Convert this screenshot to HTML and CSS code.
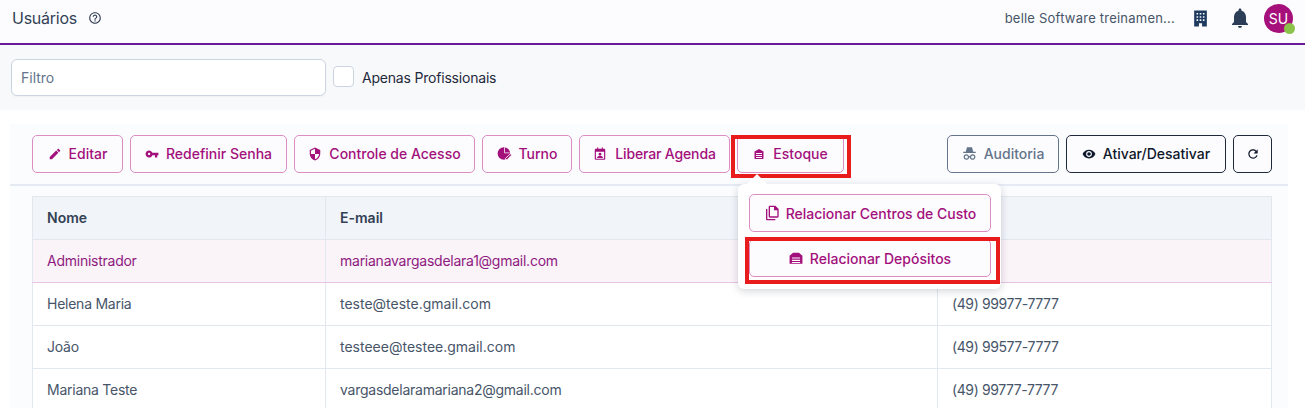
FILE: index.html
```html
<!DOCTYPE html>
<html lang="pt-BR">
<head>
<meta charset="utf-8">
<title>Usuários</title>
<link rel="stylesheet" href="styles.css">
</head>
<body>
<header class="topbar">
  <div class="topbar-left">
    <h1 class="page-title">Usuários</h1>
    <svg class="help-icon" viewBox="0 0 24 24"><path d="M11 18h2v-2h-2v2zm1-16C6.48 2 2 6.48 2 12s4.48 10 10 10 10-4.48 10-10S17.52 2 12 2zm0 18c-4.41 0-8-3.59-8-8s3.59-8 8-8 8 3.59 8 8-3.59 8-8 8zm0-14c-2.21 0-4 1.79-4 4h2c0-1.1.9-2 2-2s2 .9 2 2c0 2-3 1.75-3 5h2c0-2.25 3-2.5 3-5 0-2.21-1.79-4-4-4z"/></svg>
  </div>
  <div class="topbar-right">
    <span class="company">belle Software treinamen...</span>
    <svg class="top-icon building" viewBox="0 0 24 24"><path fill-rule="evenodd" d="M4 2h16v20h-6v-4h-4v4H4V2zm3 3v2h2V5H7zm4 0v2h2V5h-2zm4 0v2h2V5h-2zM7 9v2h2V9H7zm4 0v2h2V9h-2zm4 0v2h2V9h-2zM7 13v2h2v-2H7zm4 0v2h2v-2h-2zm4 0v2h2v-2h-2z"/></svg>
    <svg class="top-icon bell" viewBox="0 0 24 24"><path d="M12 22c1.1 0 2-.9 2-2h-4c0 1.1.89 2 2 2zm6-6v-5c0-3.07-1.64-5.64-4.5-6.32V4c0-.83-.67-1.5-1.5-1.5s-1.5.67-1.5 1.5v.68C7.63 5.36 6 7.92 6 11v5l-2 2v1h16v-1l-2-2z"/></svg>
    <div class="avatar">SU<span class="status-dot"></span></div>
  </div>
</header>

<section class="filter-bar">
  <input class="filter-input" type="text" placeholder="Filtro">
  <label class="check-label"><span class="checkbox"></span>Apenas Profissionais</label>
</section>

<main class="card-wrap">
  <div class="card">
    <div class="toolbar">
      <div class="toolbar-group">
        <button class="btn btn-pink btn-editar"><svg class="ico" viewBox="0 0 24 24"><path d="M3 17.25V21h3.75L17.81 9.94l-3.75-3.75L3 17.25zM20.71 7.04c.39-.39.39-1.02 0-1.41l-2.34-2.34c-.39-.39-1.02-.39-1.41 0l-1.83 1.83 3.75 3.75 1.83-1.83z"/></svg>Editar</button>
        <button class="btn btn-pink btn-senha"><svg class="ico" viewBox="0 0 24 24"><path d="M12.65 10C11.83 7.67 9.61 6 7 6c-3.31 0-6 2.69-6 6s2.69 6 6 6c2.61 0 4.83-1.67 5.65-4H17v4h4v-4h2v-4H12.65zM7 14c-1.1 0-2-.9-2-2s.9-2 2-2 2 .9 2 2-.9 2-2 2z"/></svg>Redefinir Senha</button>
        <button class="btn btn-pink btn-acesso"><svg class="ico" viewBox="0 0 24 24"><path d="M12 1L3 5v6c0 5.55 3.84 10.74 9 12 5.16-1.26 9-6.45 9-12V5l-9-4zm0 10.99h7c-.53 4.12-3.28 7.79-7 8.94V12H5V6.3l7-3.11v8.8z"/></svg>Controle de Acesso</button>
        <button class="btn btn-pink btn-turno"><svg class="ico ico-turno" viewBox="0 0 24 24"><circle cx="11" cy="12" r="10"/><path d="M12 2v9l8 0" fill="none" stroke="#fcfcfe" stroke-width="1.2"/><path d="M21.5 12.5l2 2-7.5 7.5h-2.5v-2.2l8-7.3z" stroke="#fcfcfe" stroke-width="1.4"/></svg>Turno</button>
        <button class="btn btn-pink btn-agenda"><svg class="ico" viewBox="0 0 24 24"><path fill-rule="evenodd" d="M7 1h2v2h6V1h2v2h2c1.1 0 2 .9 2 2v15c0 1.1-.9 2-2 2H5c-1.1 0-2-.9-2-2V5c0-1.1.9-2 2-2h2V1zM5 8v12h14V8H5zm7 2a2.5 2.5 0 1 1 0 5 2.5 2.5 0 0 1 0-5zm-5 8c0-1.7 3.3-2.500 5-2.500s5 .8 5 2.500v1H7v-1z"/></svg>Liberar Agenda</button>
        <div class="stock-wrap">
          <button class="btn btn-pink btn-estoque"><svg class="ico ico-small" viewBox="0 0 24 24"><path fill-rule="evenodd" d="M12 2l9 5v14c0 .6-.4 1-1 1H4c-.6 0-1-.4-1-1V7l9-5zM6 10v2h12v-2H6zm0 4v2h12v-2H6zm0 4v2h12v-2H6z"/></svg>Estoque</button>
          <div class="mark mark-stock"></div>
          <div class="popover">
            <span class="popover-arrow"></span>
            <button class="btn btn-pink btn-menu"><svg class="ico ico-copy" viewBox="0 0 24 24"><path fill-rule="evenodd" d="M3 6h2v15h12v2H5c-1.100 0-2-.9-2-2V6zM9 1h8l5 5v11c0 1.100-.9 2-2 2H9c-1.100 0-2-.9-2-2V3c0-1.100.9-2 2-2zm0 2v14h11V8h-5V3H9z"/></svg>Relacionar Centros de Custo</button>
            <button class="btn btn-pink btn-menu"><svg class="ico ico-dep" viewBox="0 0 24 24"><path fill-rule="evenodd" d="M7 3h10l6 5v14H1V8l6-5zM5 11v2h14v-2H5zm0 4v2h14v-2H5zm0 4v1.500h14V19H5z"/></svg>Relacionar Depósitos</button>
            <div class="mark mark-menu"></div>
          </div>
        </div>
      </div>
      <div class="toolbar-group">
        <button class="btn btn-grey btn-auditoria"><svg class="ico ico-audit" viewBox="0 0 24 24"><path fill-rule="evenodd" d="M8 2h8l2 7h4v2H2V9h4l2-7zM7 13a4.500 4.500 0 0 1 4.300 3.200c.5-.2 1-.2 1.400 0a4.500 4.500 0 1 1-.2 2 1.500 1.500 0 0 0-1 0A4.500 4.500 0 1 1 7 13zm0 2a2.500 2.500 0 1 0 0 5 2.500 2.500 0 0 0 0-5zm10 0a2.500 2.500 0 1 0 0 5 2.500 2.500 0 0 0 0-5z"/></svg>Auditoria</button>
        <button class="btn btn-dark btn-ativar"><svg class="ico" viewBox="0 0 24 24"><path d="M12 4.500C7 4.500 2.730 7.610 1 12c1.730 4.390 6 7.500 11 7.500s9.270-3.110 11-7.500c-1.730-4.390-6-7.500-11-7.500zM12 17c-2.760 0-5-2.240-5-5s2.240-5 5-5 5 2.240 5 5-2.240 5-5 5zm0-8c-1.660 0-3 1.340-3 3s1.340 3 3 3 3-1.340 3-3-1.340-3-3-3z"/></svg>Ativar/Desativar</button>
        <button class="btn btn-dark btn-refresh"><svg class="ico" viewBox="0 0 24 24"><path d="M17.65 6.35C16.2 4.9 14.21 4 12 4c-4.42 0-7.99 3.58-7.99 8s3.57 8 7.99 8c3.73 0 6.84-2.55 7.73-6h-2.08c-.82 2.33-3.04 4-5.65 4-3.31 0-6-2.69-6-6s2.69-6 6-6c1.66 0 3.14.69 4.22 1.78L13 11h7V4l-2.35 2.35z"/></svg></button>
      </div>
    </div>
    <div class="table-wrap">
      <table class="users">
        <thead>
          <tr><th class="col-name">Nome</th><th class="col-mail">E-mail</th><th></th></tr>
        </thead>
        <tbody>
          <tr class="selected"><td>Administrador</td><td>marianavargasdelara1@gmail.com</td><td></td></tr>
          <tr><td>Helena Maria</td><td class="plain">teste@teste.gmail.com</td><td class="phone">(49) 99977-7777</td></tr>
          <tr><td>João</td><td class="plain">testeee@testee.gmail.com</td><td class="phone">(49) 99577-7777</td></tr>
          <tr><td>Mariana Teste</td><td>vargasdelaramariana2@gmail.com</td><td class="phone">(49) 99777-7777</td></tr>
        </tbody>
      </table>
    </div>
  </div>
</main>
</body>
</html>
```

FILE: styles.css
```css
* { box-sizing: border-box; }
html, body { margin: 0; height: 408px; overflow: hidden; }
body { background: #fff; font-family: Inter, "Noto Sans", sans-serif; color: #334155; font-size: 14px; }

.topbar { height: 45px; padding: 0 12px 7px 12px; display: flex; align-items: center; justify-content: space-between; background: #fcfcfe; border-bottom: 2px solid #6a1b9a; }
.topbar-left, .topbar-right { display: flex; align-items: center; }
.page-title { margin: 0; font-size: 16px; font-weight: 400; color: #334155; letter-spacing: -0.25px; }
.help-icon { width: 14px; height: 14px; margin-left: 11px; fill: #334155; }
.company { font-size: 13px; color: #475569; letter-spacing: 0.22px; }
.top-icon { fill: #1e3a5f; }
.building { width: 19px; height: 19px; margin-left: 16px; }
.bell { width: 24px; height: 24px; margin-left: 18px; fill: #2b3d57; }
.avatar { position: relative; margin-left: 12px; width: 29px; height: 29px; border-radius: 50%; background: #a6107a; color: #fff; font-size: 14px; display: flex; align-items: center; justify-content: center; }
.status-dot { position: absolute; right: -2px; bottom: -1px; width: 11px; height: 11px; border-radius: 50%; background: #8bc34a; }

.filter-bar { height: 65px; padding: 14px 11px 0; display: flex; align-items: flex-start; background: #f8f9fb; }
.filter-input { width: 315px; height: 37px; padding: 0 9px; border: 1px solid #cbd5e1; border-radius: 6px; background: #fff; font: 14px Inter, sans-serif; box-shadow: 0 1px 2px rgba(0,0,0,.04); }
.filter-input::placeholder { color: #64748b; }
.check-label { display: flex; align-items: center; margin: 8px 0 0 7px; font-size: 14px; color: #1e293b; letter-spacing: -0.2px; }
.checkbox { width: 21px; height: 21px; margin: -1px 8px 0 0; border: 1px solid #cbd5e1; border-radius: 4px; background: #fff; }

.card-wrap { padding: 14px 17px 0 10px; }
.card { background: #fbfcfe; height: 300px; }
.toolbar { height: 62px; padding: 11px 16px 0 22px; display: flex; justify-content: space-between; align-items: flex-start; border-bottom: 2px solid #e6ebf3; }
.toolbar-group { display: flex; gap: 7px; }
.btn { height: 38px; padding: 0 0 1px; display: inline-flex; align-items: center; justify-content: center; border-radius: 5px; background: #fcfcfe; font: 500 14px Inter, sans-serif; cursor: pointer; white-space: nowrap; }
.btn-pink { border: 1px solid #dc8ec4; color: #a3107c; }
.btn-grey { border: 1px solid #64748b; color: #64748b; }
.btn-dark { border: 1px solid #1e293b; color: #0f172a; }
.ico { width: 14px; height: 14px; margin-right: 7px; fill: currentColor; flex: none; }
.ico-small { width: 12px; height: 12px; margin-right: 8px; }
.ico-copy { width: 16px; height: 16px; margin-right: 6px; }
.ico-dep { width: 14px; height: 14px; margin-right: 7px; }
.ico-turno { width: 15px; height: 15px; margin-right: 7px; }
.ico-audit { width: 15px; height: 15px; margin-right: 7px; }
.btn-editar { width: 91px; }
.btn-senha { width: 157px; }
.btn-acesso { width: 181px; }
.btn-turno { width: 90px; }
.btn-agenda { width: 151px; letter-spacing: -0.15px; }
.btn-agenda .ico { margin-right: 8px; }
.btn-estoque { width: 107px; }
.btn-auditoria { width: 112px; }
.btn-ativar { width: 160px; }
.btn-refresh { width: 39px; }
.btn-refresh .ico { margin: 0; }

.stock-wrap { position: relative; }
.mark { position: absolute; border: 4px solid #e81c1c; pointer-events: none; }
.mark-stock { left: -6px; top: 0; width: 120px; height: 43px; }
.popover { position: absolute; z-index: 2; left: 1px; top: 49px; width: 263px; height: 105px; padding: 10px 10px 0 11px; display: flex; flex-direction: column; gap: 7px; background: #fff; border-radius: 6px; box-shadow: 0 2px 8px rgba(15,23,42,.18); }
.popover-arrow { position: absolute; left: 12px; top: -7px; width: 14px; height: 14px; background: #fff; transform: rotate(45deg); }
.btn-menu { position: relative; width: 242px; padding: 0; }
.mark-menu { left: 7px; top: 53px; width: 255px; height: 47px; }

.table-wrap { padding: 10px 16px 0 22px; }
.users { width: 100%; border-collapse: collapse; table-layout: fixed; }
.users th, .users td { height: 43px; padding: 0 14px 2px; border: 1px solid #e2e8f0; text-align: left; font-size: 14px; }
.users th { background: #f1f4f9; font-weight: 600; color: #334155; }
.users td { background: #fff; color: #475569; letter-spacing: -0.25px; }
.users td.plain { letter-spacing: 0; }
.users td.phone { letter-spacing: -0.4px; }
.col-name { width: 293px; }
.col-mail { width: 612px; }
.users .selected td { background: #faf3f8; color: #8e1a80; border-bottom-color: #e9c3e4; }
```
